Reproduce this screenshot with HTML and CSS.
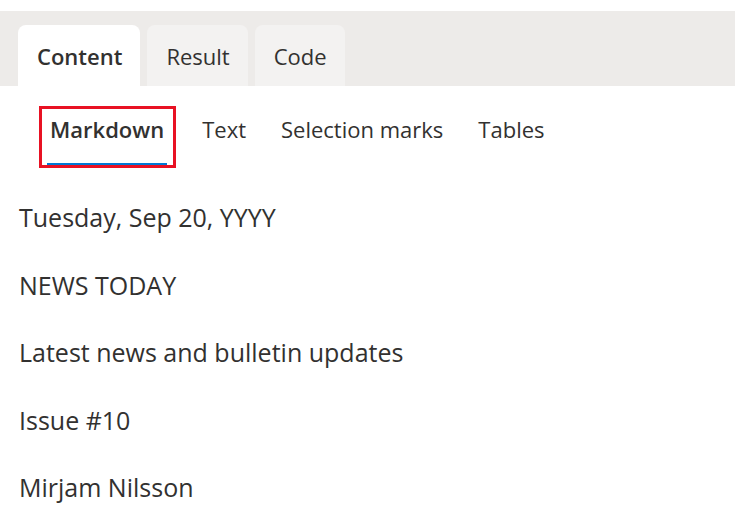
FILE: index.html
```html
<!DOCTYPE html>
<html>
<head>
<meta charset="utf-8">
<link rel="stylesheet" href="styles.css">
</head>
<body>
<div class="tabbar">
  <div class="tab active">Content</div>
  <div class="tab">Result</div>
  <div class="tab">Code</div>
</div>
<div class="subtabs">
  <div class="subtab selected">Markdown<span class="highlight"></span></div>
  <div class="subtab">Text</div>
  <div class="subtab">Selection marks</div>
  <div class="subtab">Tables</div>
</div>
<div class="content">
  <p>Tuesday, Sep 20, YYYY</p>
  <p>NEWS TODAY</p>
  <p>Latest news and bulletin updates</p>
  <p>Issue #10</p>
  <p>Mirjam Nilsson</p>
</div>
</body>
</html>
```
FILE: styles.css
```css
body {
  margin: 0;
  background: #ffffff;
  font-family: "Open Sans", "Noto Sans", sans-serif;
  color: #323130;
}
.tabbar {
  margin-top: 11px;
  height: 75px;
  background: #edebe9;
  display: flex;
  align-items: flex-end;
  padding-left: 18px;
  gap: 7px;
}
.tab {
  height: 61px;
  display: flex;
  align-items: center;
  padding: 0 18px 0 19px;
  border-radius: 8px 8px 0 0;
  background: #f3f2f1;
  font-size: 22px;
}
.tab.active {
  background: #ffffff;
  font-weight: 600;
}
.subtabs {
  display: flex;
  padding-left: 47px;
  gap: 35px;
  margin-top: 23px;
}
.subtab {
  position: relative;
  height: 56px;
  padding-top: 4px;
  box-sizing: border-box;
  font-size: 22px;
  line-height: 32px;
}
.subtab.selected {
  font-weight: 600;
  padding-left: 3px;
  padding-right: 3px;
  border-bottom: 2px solid #0078d4;
}
.highlight {
  position: absolute;
  left: -8px;
  right: -9px;
  top: -3px;
  bottom: -5px;
  border: 3px solid #e81123;
}
.content {
  padding-left: 19px;
  margin-top: 35px;
}
.content p {
  margin: 0 0 33.5px 0;
  font-size: 25px;
  line-height: 34px;
}
```
